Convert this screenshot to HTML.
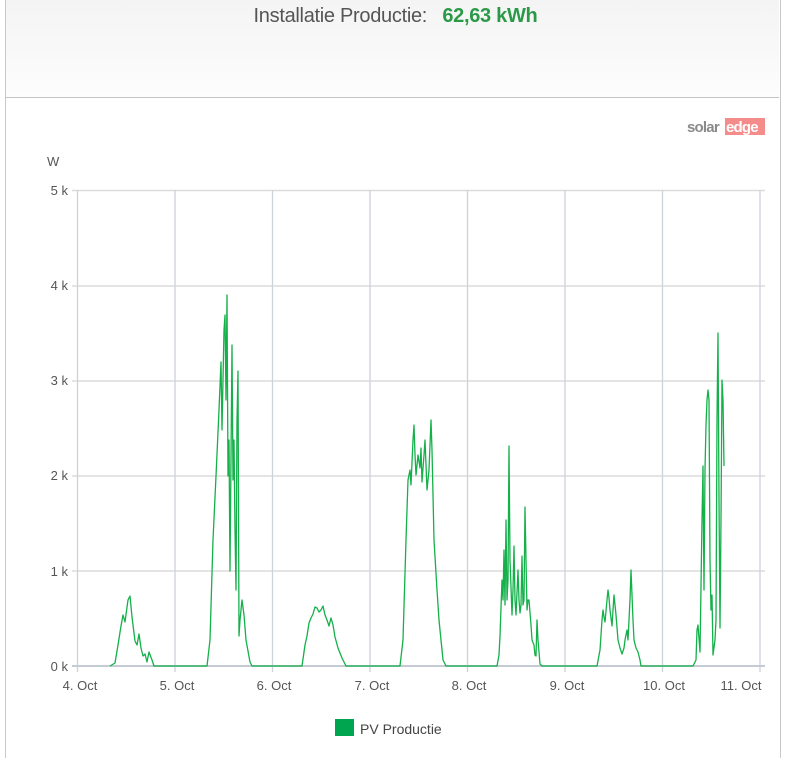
<!DOCTYPE html>
<html><head><meta charset="utf-8"><style>
html,body{margin:0;padding:0;background:#fff;width:791px;height:751px;overflow:hidden;font-family:"Liberation Sans",sans-serif}
.box{position:absolute;left:5px;top:-2px;width:774px;height:760px;border-left:1px solid #c8c8c8;border-right:1px solid #c8c8c8}
.hdr{position:absolute;left:6px;top:0;width:773px;height:97px;background:linear-gradient(#f4f4f4,#fdfdfd);border-bottom:1px solid #c4c4c4}
.title{position:absolute;top:5px;left:0;width:791px;text-align:center;font-size:20px;color:#555;letter-spacing:-0.3px}
.title b{color:#2b9a48;margin-left:10px}
</style></head><body>
<div class="hdr"></div><div class="box"></div>
<div class="title">Installatie Productie: <b>62,63 kWh</b></div>
<svg width="791" height="751" style="position:absolute;left:0;top:0" font-family="Liberation Sans, sans-serif">
<text x="687" y="132" font-size="15" font-weight="bold" fill="#8a8a8a" letter-spacing="-0.8">solar</text>
<rect x="725" y="118" width="40" height="17" fill="#f58c8c"/>
<text x="726" y="132" font-size="15" font-weight="bold" fill="#fff" letter-spacing="-0.8">edge</text>
<text x="47" y="166" font-size="13" fill="#555">W</text>
<g stroke="#dcdcdc" stroke-width="1.5">
<line x1="72" y1="190.5" x2="765" y2="190.5"/><line x1="72" y1="286" x2="765" y2="286"/><line x1="72" y1="381" x2="765" y2="381"/><line x1="72" y1="476" x2="765" y2="476"/><line x1="72" y1="571" x2="765" y2="571"/>
</g>
<g stroke="#ccd3dc" stroke-width="1.3">
<line x1="77.5" y1="190" x2="77.5" y2="672"/><line x1="175" y1="190" x2="175" y2="672"/><line x1="272.5" y1="190" x2="272.5" y2="672"/><line x1="370" y1="190" x2="370" y2="672"/><line x1="467.5" y1="190" x2="467.5" y2="672"/><line x1="565" y1="190" x2="565" y2="672"/><line x1="662.5" y1="190" x2="662.5" y2="672"/><line x1="760" y1="190" x2="760" y2="672"/>
</g>
<line x1="72" y1="666" x2="765" y2="666" stroke="#c5cbd5" stroke-width="2"/>
<g font-size="13" fill="#555" text-anchor="end">
<text x="68" y="195">5 k</text><text x="68" y="290">4 k</text><text x="68" y="385">3 k</text><text x="68" y="480">2 k</text><text x="68" y="576">1 k</text><text x="68" y="671">0 k</text>
</g>
<g font-size="13" fill="#555" text-anchor="middle">
<text x="80" y="690">4. Oct</text><text x="177" y="690">5. Oct</text><text x="274" y="690">6. Oct</text><text x="372" y="690">7. Oct</text><text x="469" y="690">8. Oct</text><text x="567" y="690">9. Oct</text><text x="664" y="690">10. Oct</text><text x="741" y="690">11. Oct</text>
</g>
<polyline fill="none" stroke="#14b04a" stroke-width="1.3" stroke-linejoin="round" points="
110,666 115,663 118,645 121,626 123,615 125,622 128,600 130,596 132,617 135,641 137,645 139,634 141,648 143,656 145,654 147,662 149,652 152,660 154,666
207,666 210,640 213,540 216,476 219,410 221,362 222,430 224,330 225,315 226,400 227,295 228,476 229,440 230,571 232,345 233,480 234,440 235,530 236,590 237,420 238,371 239,636 240,620 242,600 244,615 246,640 250,662 252,666
302,666 305,645 307,636 309,623 311,618 313,614 315,607 317,608 319,612 321,610 323,606 325,615 327,620 329,626 331,618 333,625 335,637 338,648 342,658 346,666
400,666 403,640 406,540 408,480 410,470 411,485 413,440 414,425 415,455 416,475 418,455 420,468 421,448 422,482 424,455 425,440 427,490 429,470 431,420 432,450 434,540 437,590 439,620 441,640 443,660 446,666
497,666 499,655 500,636 502,580 503,600 504,550 505,605 506,520 507,600 508,580 509,446 510,560 512,615 513,590 514,546 515,600 516,615 518,570 519,600 520,613 521,605 522,556 523,605 524,600 525,507 526,560 527,610 528,600 529,600 531,625 532,640 534,645 535,655 536,656 537,620 538,640 540,664 542,666
597,666 600,650 602,620 603,610 604,617 605,622 607,600 608,590 609,598 610,610 612,626 613,610 614,595 616,615 618,640 620,648 622,654 624,648 625,640 627,630 628,640 630,600 631,570 633,620 634,640 636,648 638,652 640,660 641,666
693,666 696,660 697,630 698,625 700,652 702,520 703,466 704,590 705,470 706,425 707,400 708,390 709,400 710,560 711,610 712,595 713,655 715,640 716,620 717,420 718,333 719,500 720,628 721,520 722,380 723,400 724,466
"/>
<rect x="335" y="719" width="19" height="17" fill="#00a64f"/>
<text x="360" y="734" font-size="14" fill="#444">PV Productie</text>
</svg>
</body></html>
